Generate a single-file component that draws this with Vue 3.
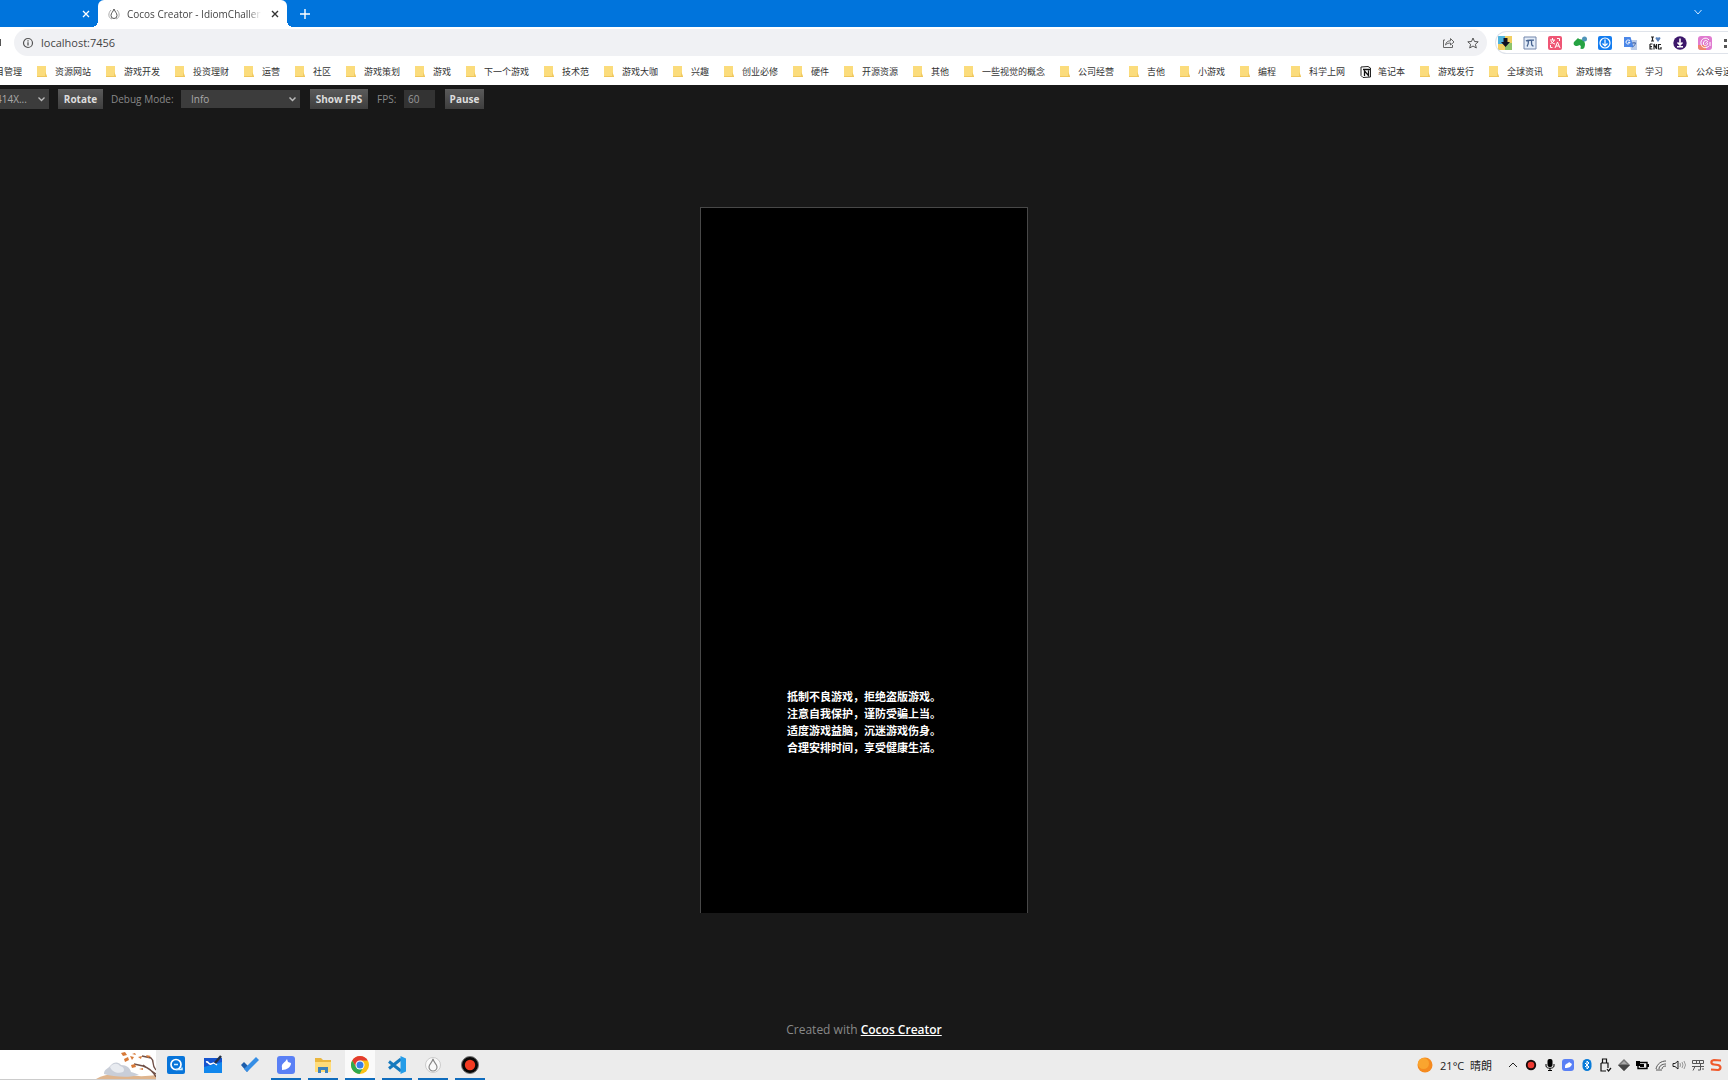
<script setup>
import { ref } from 'vue'

const bookmarks = [
  '资源网站', '游戏开发', '投资理财', '运营', '社区', '游戏策划', '游戏', '下一个游戏', '技术范',
  '游戏大咖', '兴趣', '创业必修', '硬件', '开源资源', '其他', '一些视觉的概念', '公司经营', '吉他',
  '小游戏', '编程', '科学上网', '笔记本', '游戏发行', '全球资讯', '游戏博客', '学习',
]
const notices = [
  '抵制不良游戏，拒绝盗版游戏。',
  '注意自我保护，谨防受骗上当。',
  '适度游戏益脑，沉迷游戏伤身。',
  '合理安排时间，享受健康生活。',
]
const address = ref('localhost:7456')
const fps = ref('60')
</script>

<template>
  <div class="screen">
    <header class="tabs">
      <div class="tab-prev">
        <button class="plain" aria-label="Close tab"><svg width="8" height="8" viewBox="0 0 8 8"><path d="M1 1l6 6M7 1L1 7" stroke="#fff" stroke-width="1.3" /></svg></button>
      </div>
      <div class="tab">
        <svg width="12" height="12" viewBox="0 0 12 12" fill="none"><path d="M3 2C0 5 0 10 4 11M9 2c3 3 3 8-1 9" stroke="#aaa" /><path d="M6 1c1 3 3 4 3 6.500a3 3 0 0 1-6 0C3 5 5 4 6 1z" stroke="#555" /></svg>
        <span class="tab-title">Cocos Creator - IdiomChallenge</span>
        <button class="plain" aria-label="Close tab"><svg width="8" height="8" viewBox="0 0 8 8"><path d="M1 1l6 6M7 1L1 7" stroke="#333" stroke-width="1.4" /></svg></button>
      </div>
      <button class="plain new-tab" aria-label="New tab"><svg width="10" height="10" viewBox="0 0 10 10"><path d="M5 0v10M0 5h10" stroke="#fff" stroke-width="1.400" /></svg></button>
      <button class="plain tab-search" aria-label="Search tabs"><svg width="8" height="6" viewBox="0 0 8 6" fill="none"><path d="M0.500 1L4 5l3.500-4" stroke="#cfe6ff" /></svg></button>
    </header>

    <div class="nav">
      <span class="home"></span>
      <div class="omnibox">
        <svg width="12" height="12" viewBox="0 0 12 12" fill="none" stroke="#555"><circle cx="6" cy="6" r="4.500" stroke-width="1.200" /><path d="M6 5.300v3.200M6 3.300v1.200" stroke-width="1.300" /></svg>
        <input v-model="address" class="address" aria-label="Address" />
        <button class="plain" aria-label="Share"><svg width="13" height="13" viewBox="0 0 13 13" fill="none" stroke="#666"><path d="M3 4H1.500v7.500h9V9M3.500 9C4 6 6 4.800 8.500 4.800V2.500L12 6 8.500 9V7C6.500 7 5 7.500 3.500 9z" /></svg></button>
        <button class="plain" aria-label="Bookmark"><svg width="12" height="12" viewBox="0 0 12 12" fill="none" stroke="#555"><path d="M6 1l1.500 3.500 3.700.3-2.800 2.500.9 3.700L6 9l-3.300 2 .9-3.700L.8 4.800l3.700-.3z" /></svg></button>
      </div>
      <div class="extensions">
        <svg viewBox="0 0 14 14"><path fill="#4fb3dc" d="M0 0h14v14H0z" /><path fill="#f2cf62" d="M7 0h7v7H7zM0 8h7v6H0z" /><path fill="#8fc46a" d="M7 7h7v7H7z" /><path fill="#112" d="M5.500 2h4v4H12l-4.500 5L3 6h2.500z" /></svg>
        <svg viewBox="0 0 14 14"><path fill="#e3ecf8" stroke="#7286ab" d="M1 1h12v12H1z" /><path fill="none" stroke="#45628f" stroke-width="1.300" d="M3 5c1-1 2-.7 8-.8M5.500 4.500c0 3 0 4-1.500 6M8.500 4.500c0 4 0 5.500 2 5.500" /></svg>
        <svg viewBox="0 0 14 14"><rect width="14" height="14" rx="2" fill="#ef5675" /><path fill="none" stroke="#fff" d="M2 4h5M4.500 2v2M2.500 7.500C5 6.500 6 5.500 6 4M3 5c1 2 2 2.500 4 3M7 12l2.500-6 2.500 6M8 10h3M9 2.500h2.500V5M4.500 11.500H2.500V9" /></svg>
        <svg viewBox="0 0 14 14"><path fill="#26a343" d="M1 6l4-4 1 1 5 1 1 4c0 3-1 5-3 5s-2-1-1-2l-1-2-3 1C1 10 0 8 1 6z" /><circle cx="11.500" cy="3" r="2.500" fill="#4f94b8" /></svg>
        <svg viewBox="0 0 14 14"><rect width="14" height="14" rx="2" fill="#147df0" /><g fill="none" stroke="#fff" stroke-width="1.200"><circle cx="7" cy="7" r="5" /><path d="M7 3.500v6M4.500 7.500L7 10l2.500-2.500" /></g></svg>
        <svg viewBox="0 0 14 14"><path fill="#b9cbe9" d="M6 4h8v10H8z" /><path fill="#4b87e8" d="M1 1h6.500L10.500 11H1z" /><path fill="none" stroke="#fff" d="M7 4.500C5.500 3.500 3 4 3 6s3 3 4 .3H5" /><path stroke="#4467a8" d="M9 7h4M11 6v1M12.500 7c-.5 2-1.500 3-3 4" fill="none" /></svg>
        <svg viewBox="0 0 14 14"><path stroke="#222" stroke-width="1.200" fill="none" d="M3 1h3M4.500 1v4M3 5h3M2 8v5.500M2 8h2.500M2 10.700h2M2 13h2.500M6 13.500V8l2.500 5V8M13 8.500h-2.500V13H13v-2" /><path fill="#5a83bd" d="M7.500 2.500c0-2 2.500-1.500 2.500-.5 0-1 2.500-1.500 2.500.5L10 6z" /></svg>
        <svg viewBox="0 0 14 14"><circle cx="7" cy="7" r="6.700" fill="#3c176b" /><path fill="none" stroke="#fff" stroke-width="1.600" d="M7 2.500v6M4.500 6.500L7 9l2.500-2.500M4 10.800h6" /></svg>
        <svg viewBox="0 0 14 14"><rect width="14" height="14" rx="3" fill="#e07bd0" /><path fill="#f0836d" d="M0 9h8v5H3q-3 0-3-3z" /><path fill="none" stroke="#fff" d="M11 4C8 0 2 3 3 8s6 4 8 2M10 6C8 3 5 5 5.500 8S9 9.500 9.500 8 8 6 7.500 7.500M12 6v4" /></svg>
        <svg viewBox="0 0 14 14"><path fill="#555" d="M1 3h3v3H1zM1 9h3v3H1z" /></svg>
      </div>
    </div>

    <nav class="bookmarks">
      <a href="#" class="mark first">项目管理</a>
      <a v-for="name in bookmarks" :key="name" href="#" class="mark">
        <svg v-if="name === '笔记本'" width="11" height="12" viewBox="0 0 11 12"><path d="M1 1l7-.5L10.500 2v9L3 11.500 1 9.500z" fill="#fff" stroke="#222" /><path d="M3 3.500h7M4.500 10V5l4 4.500V4.500" stroke="#111" stroke-width="1.300" fill="none" /></svg>
        <svg v-else width="11" height="12" viewBox="0 0 11 12"><path fill="#fbdc7c" d="M0 0h9v8l1 3H0z" /><path fill="#efc65c" d="M0 10h10v1H0zM8.500 6l1.500 5H8z" /></svg>
        <span>{{ name }}</span>
      </a>
      <a href="#" class="mark last">
        <svg width="11" height="12" viewBox="0 0 11 12"><path fill="#fbdc7c" d="M0 0h9v8l1 3H0z" /><path fill="#efc65c" d="M0 10h10v1H0zM8.500 6l1.500 5H8z" /></svg>
        <span>公众号运营</span>
      </a>
    </nav>

    <main class="preview">
      <div class="controls">
        <div class="device-clip">
          <div class="pick device">
            <select aria-label="Device"><option>414X...</option></select>
            <svg width="7" height="5" viewBox="0 0 7 5" fill="none"><path d="M.5.5l3 3 3-3" stroke="#bbb" stroke-width="1.300" /></svg>
          </div>
        </div>
        <button class="btn rotate">Rotate</button>
        <label for="debug" class="debug-label">Debug Mode:</label>
        <div class="pick debug">
          <select id="debug"><option>Info</option></select>
          <svg width="7" height="5" viewBox="0 0 7 5" fill="none"><path d="M.5.5l3 3 3-3" stroke="#bbb" stroke-width="1.500" /></svg>
        </div>
        <button class="btn show">Show FPS</button>
        <label for="fps" class="fps-label">FPS:</label>
        <input id="fps" v-model="fps" class="fps" />
        <button class="btn pause">Pause</button>
      </div>
      <div class="stage">
        <div class="game">
          <p v-for="line in notices" :key="line">{{ line }}</p>
        </div>
      </div>
      <footer class="credit">Created with <a href="#">Cocos Creator</a></footer>
    </main>

    <div class="taskbar">
      <div class="search">
        <svg width="60" height="29" viewBox="0 0 60 29">
          <path d="M0 29c8-5 20-6 32-4s20 1 28 0v4z" fill="#dfb58e" />
          <path d="M8 24c0-5 4-5 6-8 4-5 9-4 11-1 6 0 9 3 10 7 4 1 6 2 8 3-10 3-25 2-35-1z" fill="#c9ced8" />
          <path d="M14 17c3-4 8-4 10-1 4 1 5 4 3 6-5 2-11 0-13-5z" fill="#e8ebf0" />
          <path d="M60 27c-3-6-7-9-13-11l-9-2M60 20c-5-5-1-9-5-12l-9-2M60 24L47 15" fill="none" stroke="#705047" stroke-width="1.400" />
          <path d="M25 3l4-1 2 3-4 1zM28 9l4-2 1 3-4 2zM34 6l4 1-2 3zM36 4l3-1 1 2zM42 7l4-1-1 3zM50 5l5 1-3 2zM35 15l4-1 1 3-4 1zM43 19l4-1v2z" fill="#d77a39" />
        </svg>
      </div>
      <div class="apps">
        <button class="app" aria-label="Assistant"><svg viewBox="0 0 20 20"><rect x="1" y="1" width="18" height="18" rx="2" fill="#0875da" /><circle cx="10" cy="9.500" r="5" fill="none" stroke="#fff" stroke-width="1.700" /><path d="M10 14.500h6v-2M8 9.500h4" stroke="#d4efff" stroke-width="1.500" fill="none" /></svg></button>
        <button class="app" aria-label="Whiteboard"><svg viewBox="0 0 20 20"><path fill="#1554cf" d="M1 3h18v15H1z" /><path fill="#1187ed" d="M1 12l18-5v11H1z" /><path fill="none" stroke="#fff" stroke-width="1.500" d="M3 7c3-1 2 3 5 2s2-2 6 1" /><path stroke="#243044" stroke-width="2.500" d="M12 8l6-7" /></svg></button>
        <button class="app" aria-label="To Do"><svg viewBox="0 0 20 20"><path fill="#1c5dab" d="M1 10l3-3 6 6-3 4z" /><path fill="#368ee5" d="M7 17l-3-3L16 2l3 3z" /></svg></button>
        <button class="app on" aria-label="Bird"><svg viewBox="0 0 20 20"><rect x="1" y="1" width="18" height="18" rx="3" fill="#5a80f5" /><path fill="#fff" d="M6 13c-1-5 3-5 5-9l1 3 3 1c0 4-4 7-9 7z" /></svg></button>
        <button class="app on" aria-label="Files"><svg viewBox="0 0 20 20"><path fill="#eab63e" d="M2 3h6l2 2h8v12H2z" /><path fill="#ffdc79" d="M2 7h16v10H2z" /><path fill="#3e82bc" d="M5 18v-6h10v6h-3v-3H8v3z" /></svg></button>
        <button class="app on current" aria-label="Browser"><svg viewBox="0 0 20 20"><circle cx="10" cy="10" r="9" fill="#fbc116" /><path fill="#e33b2e" d="M2.200 5.500A9 9 0 0 1 17.800 5.500H10L6 12z" /><path fill="#2da94f" d="M2.200 5.500A9 9 0 0 0 9.500 19l4-7H6z" /><circle cx="10" cy="10" r="4.500" fill="#fff" /><circle cx="10" cy="10" r="3.500" fill="#397de5" /></svg></button>
        <button class="app on" aria-label="Code editor"><svg viewBox="0 0 20 20"><path fill="none" stroke="#1679be" stroke-width="3" d="M14 4L2 13.500M14 16L2 6.500" /><path fill="#249ce8" d="M13.500 1L19 3.500v13L13.500 19z" /></svg></button>
        <button class="app on" aria-label="Cocos"><svg viewBox="0 0 20 20" fill="none"><circle cx="10" cy="10" r="7.500" fill="#fafafa" stroke="#ccc" /><path d="M10 4c1 4 4 5 4 8a4 4 0 0 1-8 0c0-3 3-4 4-8z" stroke="#888" stroke-width="1.200" /></svg></button>
        <button class="app on" aria-label="Recorder"><svg viewBox="0 0 20 20"><circle cx="10" cy="10" r="8.500" fill="#080808" stroke="#777" /><circle cx="10" cy="10" r="5.200" fill="#f33b22" /></svg></button>
      </div>
      <div class="weather">
        <svg width="16" height="16" viewBox="0 0 16 16"><circle cx="8" cy="8" r="7.500" fill="#f58a1f" /><circle cx="6.500" cy="6.500" r="5.500" fill="#faa52f" /></svg>
        <span>21°C&nbsp; 晴朗</span>
      </div>
      <div class="tray">
        <svg viewBox="0 0 16 16" fill="none" stroke="#222"><path d="M4 10l4-4 4 4" /></svg>
        <svg viewBox="0 0 16 16"><circle cx="8" cy="8" r="5.200" fill="#180c0c" /><circle cx="8" cy="8" r="3.300" fill="#f03a32" /></svg>
        <svg viewBox="0 0 16 16"><rect x="5.500" y="2" width="5" height="8" rx="2" /><path d="M4 7v2c0 3 8 3 8 0V7M8 11v3M6 13.500h4" fill="none" stroke="#000" /></svg>
        <svg viewBox="0 0 16 16"><rect x="2" y="2" width="12" height="12" rx="3" fill="#5a80f5" /><path fill="#fff" d="M5 10c0-4 3-3 4-5l3 2c-1 3-3 4-7 4z" /></svg>
        <svg viewBox="0 0 16 16"><rect x="3.500" y="2" width="9" height="12" rx="4.500" fill="#087bd8" /><path fill="none" stroke="#fff" d="M6 6l4 4-2 2V4l2 2-4 4" /></svg>
        <svg viewBox="0 0 16 16" fill="none" stroke="#111" stroke-width="1.200"><path d="M5.500 6V2h4v4M4 6h7v5M4 6v8h5M10 12l1.500 2 2.500-3" /></svg>
        <svg viewBox="0 0 16 16"><path fill="#777" d="M8 2l6 6-6 6-6-6z" /><path fill="#444" d="M14 8l-6 6-6-6z" /><path fill="#aaa" d="M8 4l3 3H5z" /></svg>
        <svg viewBox="0 0 16 16"><path d="M4 5.500h9v6H4z" fill="none" stroke="#000" stroke-width="1.400" /><path d="M13 7h2v3h-2zM2 4h4v5H2zM6 7h4v3H6z" /></svg>
        <svg viewBox="0 0 16 16" fill="none" stroke="#555"><path d="M3 12C4 7 8 4 13 4M6 12c0-3 3-5 7-5M9 12c0-2 2-3 4-3M3 13h6" /></svg>
        <svg viewBox="0 0 16 16" fill="none" stroke="#222"><path d="M2 6.500h2L7 4v8L4 9.500H2z" /><path d="M9 6q1 2 0 4M11 5q2 3 0 6M13 4q3 4 0 8" stroke="#999" /></svg>
        <svg viewBox="0 0 16 16" fill="none" stroke="#555"><path d="M2.500 3.500h11v3h-11zM6.500 3v4M9.500 3v4M2 9.500h12M5 9.500l-2 4M10.500 7v6H8M13 11v2" /></svg>
        <svg viewBox="0 0 16 16" fill="none"><path d="M13 3.500L6 3C2.500 3.500 2.500 7 6 7.500l4 .5c3.500 1 3 4.500 0 5l-7-.5" stroke="#f0592b" stroke-width="2.200" /></svg>
      </div>
    </div>
  </div>
</template>

<style>
body { margin: 0; background: #181818; }
</style>

<style scoped>
* { box-sizing: border-box; }
.screen {
  display: flex;
  flex-direction: column;
  min-height: 100vh;
  overflow: hidden;
  font-family: "Open Sans", "Noto Sans CJK SC", sans-serif;
  font-size: 10px;
  color: #444;
}
svg { display: block; flex: none; }
button, input, select { font: inherit; color: inherit; margin: 0; border: 0; padding: 0; background: none; }
.plain { display: flex; align-items: center; justify-content: center; flex: none; }

.tabs { display: flex; align-items: stretch; height: 27px; background: #0074dc; }
.tab-prev { display: flex; align-items: center; justify-content: flex-end; width: 98px; padding-right: 8px; }
.tab {
  position: relative;
  display: flex;
  align-items: center;
  width: 189px;
  padding: 0 8px 0 10px;
  border-radius: 6px 6px 0 0;
  background: #fff;
}
.tab::before, .tab::after { content: ""; position: absolute; bottom: 0; width: 6px; height: 6px; }
.tab::before { left: -6px; background: radial-gradient(circle at 0 0, transparent 6px, #fff 6px); }
.tab::after { right: -6px; background: radial-gradient(circle at 100% 0, transparent 6px, #fff 6px); }
.tab-title {
  flex: 1;
  min-width: 0;
  margin: 0 10px 0 7px;
  overflow: hidden;
  white-space: nowrap;
  -webkit-mask-image: linear-gradient(90deg, #000 90%, transparent);
  mask-image: linear-gradient(90deg, #000 90%, transparent);
}
.new-tab { margin-left: 13px; }
.tab-search { margin: 0 26px 4px auto; }

.nav { display: flex; align-items: center; height: 31px; background: #fff; }
.home { width: 1px; height: 7px; margin-right: 13px; background: #555; }
.omnibox {
  display: flex;
  flex: 1;
  align-items: center;
  gap: 12px;
  height: 27px;
  padding: 0 8px;
  border-radius: 14px;
  background: #f0f1f4;
}
.address { flex: 1; min-width: 0; margin-left: -5px; outline: 0; font-size: 11px; }
.extensions {
  display: flex;
  align-items: center;
  gap: 11px;
  width: 233px;
  height: 23px;
  margin-left: 8px;
  padding-left: 2px;
  overflow: hidden;
  border: 1px solid #dfe3ea;
  border-right: 0;
  border-radius: 12px 0 0 12px;
}
.extensions svg { width: 14px; height: 14px; }

.bookmarks { display: flex; justify-content: space-between; align-items: center; height: 27px; overflow: hidden; background: #fff; font-size: 9px; line-height: 14px; }
.mark { display: flex; align-items: center; gap: 7px; flex: none; color: #333; text-decoration: none; white-space: nowrap; }
.first { justify-content: flex-end; width: 22px; overflow: hidden; }
.last { width: 50px; overflow: hidden; }

.preview { display: flex; flex: 1; flex-direction: column; background: #181818; color: #888; }
.controls { display: flex; align-items: center; height: 24px; padding-top: 4px; }
.device-clip { display: flex; justify-content: flex-end; width: 49px; overflow: hidden; }
.pick { position: relative; display: flex; align-items: center; flex: none; }
.pick select { width: 100%; appearance: none; border-radius: 0; background: #3c3c3c; color: #aaa; }
.pick svg { position: absolute; right: 4px; pointer-events: none; }
.device { width: 56px; }
.device select { height: 20px; padding-left: 3px; }
.debug { width: 119px; margin-left: 8px; }
.debug select { height: 18px; padding-left: 10px; }
.btn { flex: none; height: 20px; background: linear-gradient(#5a5a5a, #3e3e3e); color: #ddd; font-weight: 700; }
.rotate { width: 45px; margin-left: 9px; }
.debug-label { width: 62px; margin-left: 8px; white-space: nowrap; }
.show { width: 58px; margin-left: 10px; }
.fps-label { width: 18px; margin-left: 9px; }
.fps { width: 31px; height: 18px; margin-left: 9px; padding-left: 4px; background: #333; color: #999; }
.pause { width: 39px; margin-left: 10px; }

.stage { display: flex; flex: 1; align-items: center; justify-content: center; }
.game {
  width: 328px;
  height: 706px;
  padding-top: 480px;
  border: 1px solid #484848;
  border-bottom: 0;
  background: #000;
  color: #fff;
  font: 700 11px/17px "Noto Sans CJK SC", sans-serif;
}
.game p { width: 154px; margin: 0 auto; white-space: nowrap; }
.credit { height: 39px; text-align: center; font-size: 12px; line-height: 38px; }
.credit a { color: #fff; font-weight: 600; }

.taskbar { display: flex; align-items: center; height: 30px; background: #ececec; }
.search { display: flex; align-items: flex-end; justify-content: flex-end; width: 156px; height: 30px; border-bottom: 1px solid #ccc; background: #fff; }
.apps { display: flex; justify-content: space-between; width: 324px; margin-left: 5px; }
.app { display: flex; align-items: center; justify-content: center; width: 30px; height: 30px; border-bottom: 2px solid transparent; border-top: 2px solid transparent; }
.app svg { width: 20px; height: 20px; }
.on { border-bottom-color: #0f6cbd; }
.current { background: #fafafa; border-top-color: #fafafa; }
.weather { display: flex; align-items: center; gap: 7px; margin-left: auto; color: #222; font-size: 11px; white-space: nowrap; }
.tray { display: flex; justify-content: space-between; width: 219px; margin: 0 4px 0 13px; }
.tray svg { width: 16px; height: 16px; }
</style>
